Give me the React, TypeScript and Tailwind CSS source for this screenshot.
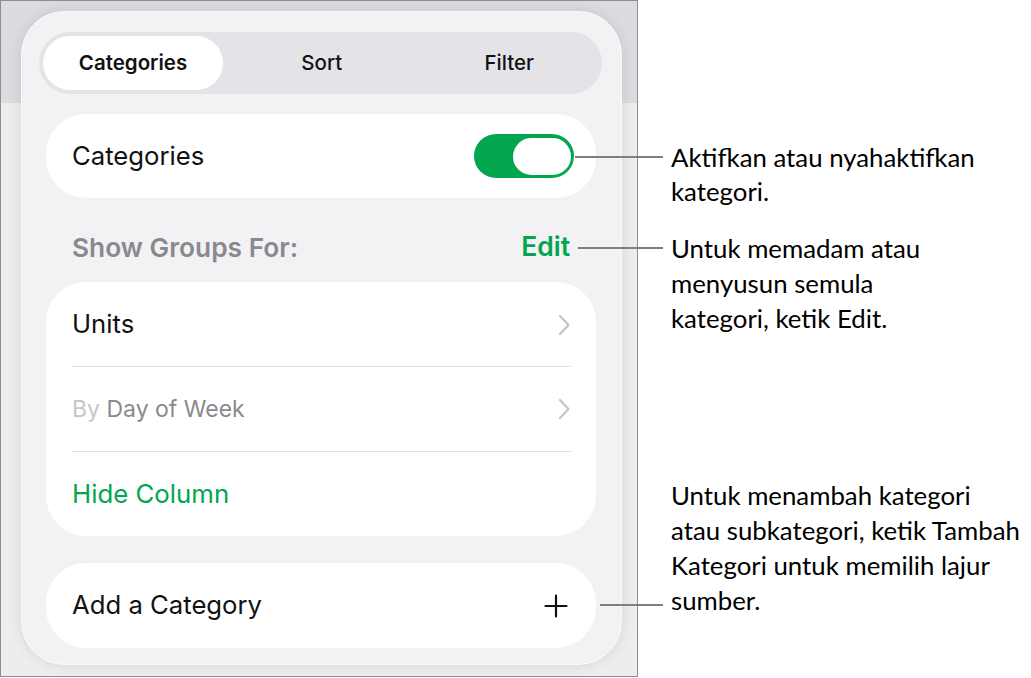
import React from "react";

const ui = { fontFamily: "Inter, Roboto, 'Liberation Sans', sans-serif" };
const callout = { fontFamily: "Lato, 'Open Sans', 'Liberation Sans', sans-serif" };

function Chevron() {
  return (
    <svg width="14" height="22" viewBox="0 0 14 22" fill="none">
      <path d="M3 2 L11.5 11 L3 20" stroke="#c4c4c7" strokeWidth="2.2" strokeLinecap="round" strokeLinejoin="round" />
    </svg>
  );
}

function Plus() {
  return (
    <svg width="24" height="24" viewBox="0 0 24 24" fill="none">
      <path d="M12 1.5 V22.5 M1.5 12 H22.5" stroke="#111" strokeWidth="2.2" strokeLinecap="round" />
    </svg>
  );
}

export default function App() {
  return (
    <div className="relative w-[1031px] h-[678px] bg-white flex overflow-hidden" style={ui}>
      {/* Screenshot frame */}
      <div className="w-[638px] h-[677px] shrink-0 border border-[#8e8e8e] bg-[linear-gradient(to_bottom,#dcdce0_102px,#ededed_102px)] pl-[20px] pt-[10px]">
        <div className="w-[601px] h-[654px] rounded-[44px] bg-[#f2f2f4] shadow-[0_0_14px_rgba(0,0,0,0.10)] border border-white/70 pt-[20px] flex flex-col">
          {/* Segmented control */}
          <div className="ml-[17px] mr-[19px] h-[62px] rounded-full bg-[#e3e3e8] p-[3px] flex items-center text-[20.5px] font-medium text-[#111]">
            <div className="w-[182px] h-[56px] rounded-full bg-white border border-[#e4e4e8] flex items-center justify-center font-semibold">
              Categories
            </div>
            <div className="flex-1 flex justify-center pl-[8px]">Sort</div>
            <div className="flex-1 flex justify-center pl-[8px]">Filter</div>
          </div>

          {/* Categories toggle card */}
          <div className="mt-[20px] ml-[24px] mr-[25px] h-[84px] rounded-[40px] bg-white flex items-center justify-between pl-[26px] pr-[22px]">
            <span className="text-[25.7px] text-[#111]">Categories</span>
            <div className="w-[100px] h-[44px] rounded-full bg-[#02a64f] flex items-center justify-end pr-[1px]">
              <div className="w-[62px] h-[41px] rounded-full bg-white border-[2px] border-[#02a64f]" />
            </div>
          </div>

          {/* Header */}
          <div className="h-[84px] ml-[50px] mr-[51px] flex items-end justify-between pb-[15px]">
            <span className="text-[26.3px] font-semibold text-[#8a8a8e]">Show Groups For:</span>
            <span className="text-[26.5px] font-semibold text-[#02a64f]">Edit</span>
          </div>

          {/* Group card */}
          <div className="ml-[24px] mr-[25px] h-[254px] rounded-[40px] bg-white flex flex-col pl-[26px] pr-[25px]">
            <div className="h-[85px] flex items-center justify-between border-b border-[#e2e2e4] pt-[1px]">
              <span className="text-[25.7px] text-[#111]">Units</span>
              <Chevron />
            </div>
            <div className="h-[85px] flex items-center justify-between border-b border-[#e2e2e4]">
              <span className="text-[23px] text-[#8a8a8e]">
                <span className="text-[#c6c6c8]">By</span> Day of Week
              </span>
              <Chevron />
            </div>
            <div className="h-[84px] flex items-center">
              <span className="text-[25.8px] text-[#02a64f]">Hide Column</span>
            </div>
          </div>

          {/* Add category */}
          <div className="mt-[27px] ml-[24px] mr-[25px] h-[85px] rounded-[40px] bg-white flex items-center justify-between pl-[26px] pr-[28px]">
            <span className="text-[25.7px] text-[#111]">Add a Category</span>
            <Plus />
          </div>
        </div>
      </div>

      {/* Callout texts */}
      <div className="ml-[33px] flex flex-col text-[25.8px] leading-[34px] text-black" style={callout}>
        <div className="mt-[140px]">
          Aktifkan atau nyahaktifkan
          <br />
          kategori.
        </div>
        <div className="mt-[23px] leading-[35px]">
          Untuk memadam atau
          <br />
          menyusun semula
          <br />
          kategori, ketik Edit.
        </div>
        <div className="mt-[142px] leading-[35px]">
          Untuk menambah kategori
          <br />
          atau subkategori, ketik Tambah
          <br />
          Kategori untuk memilih lajur
          <br />
          sumber.
        </div>
      </div>

      {/* Leader lines */}
      <div className="absolute left-[575px] top-[156px] w-[88px] h-[2px] bg-[#7f7f7f]" />
      <div className="absolute left-[578px] top-[247px] w-[85px] h-[2px] bg-[#7f7f7f]" />
      <div className="absolute left-[600px] top-[604px] w-[63px] h-[2px] bg-[#7f7f7f]" />
    </div>
  );
}
